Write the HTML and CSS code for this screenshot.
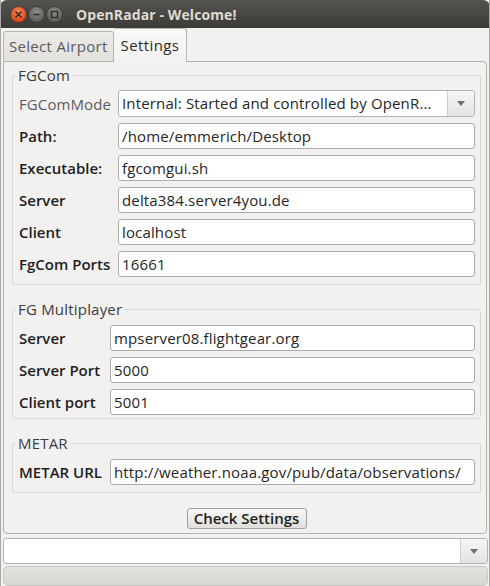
FILE: index.html
```html
<!DOCTYPE html>
<html lang="en">
<head>
    <meta charset="UTF-8">
    <title>OpenRadar - Welcome!</title>
    <link rel="stylesheet" href="styles.css">
</head>
<body>
    <div class="window">
        <div class="titlebar">
            <div class="win-buttons">
                <svg class="wbtn" width="17" height="17" viewBox="0 0 17 17">
                    <defs>
                        <radialGradient id="gClose" cx="50%" cy="35%" r="60%">
                            <stop offset="0" stop-color="#f7875a"/>
                            <stop offset="1" stop-color="#d9471a"/>
                        </radialGradient>
                    </defs>
                    <circle cx="8.5" cy="8.5" r="8" fill="url(#gClose)" stroke="#3a2a22" stroke-width="0.6"/>
                    <path d="M6 6 L11 11 M11 6 L6 11" stroke="#3c2a20" stroke-width="1.6" stroke-linecap="round"/>
                </svg>
                <svg class="wbtn" width="17" height="17" viewBox="0 0 17 17">
                    <defs>
                        <radialGradient id="gGrey" cx="50%" cy="35%" r="60%">
                            <stop offset="0" stop-color="#8f8e89"/>
                            <stop offset="1" stop-color="#5e5d58"/>
                        </radialGradient>
                    </defs>
                    <circle cx="8.5" cy="8.5" r="8" fill="url(#gGrey)" stroke="#2f2e2b" stroke-width="0.6"/>
                    <path d="M5.5 8.5 H11.5" stroke="#2e2d2a" stroke-width="1.6"/>
                </svg>
                <svg class="wbtn" width="17" height="17" viewBox="0 0 17 17">
                    <circle cx="8.5" cy="8.5" r="8" fill="url(#gGrey)" stroke="#2f2e2b" stroke-width="0.6"/>
                    <rect x="5.5" y="5.5" width="6" height="6" fill="none" stroke="#2e2d2a" stroke-width="1.4"/>
                </svg>
            </div>
            <div class="title">OpenRadar - Welcome!</div>
        </div>

        <div class="tabs">
            <div class="tab">Select Airport</div>
            <div class="tab active">Settings</div>
        </div>

        <div class="pane">
            <fieldset class="group">
                <legend>FGCom</legend>
                <div class="form first">
                    <label class="disabled">FGComMode</label>
                    <div class="combo">
                        <span class="combo-value">Internal: Started and controlled by OpenR...</span>
                        <span class="combo-arrow"></span>
                    </div>
                    <label>Path:</label>
                    <div class="field">/home/emmerich/Desktop</div>
                    <label>Executable:</label>
                    <div class="field">fgcomgui.sh</div>
                    <label>Server</label>
                    <div class="field">delta384.server4you.de</div>
                    <label>Client</label>
                    <div class="field">localhost</div>
                    <label>FgCom Ports</label>
                    <div class="field">16661</div>
                </div>
            </fieldset>

            <fieldset class="group tight">
                <legend>FG Multiplayer</legend>
                <div class="form">
                    <label>Server</label>
                    <div class="field">mpserver08.flightgear.org</div>
                    <label>Server Port</label>
                    <div class="field">5000</div>
                    <label>Client port</label>
                    <div class="field">5001</div>
                </div>
            </fieldset>

            <fieldset class="group">
                <legend>METAR</legend>
                <div class="form">
                    <label>METAR URL</label>
                    <div class="field">http://weather.noaa.gov/pub/data/observations/</div>
                </div>
            </fieldset>

            <div class="actions">
                <button class="btn">Check Settings</button>
            </div>
        </div>

        <div class="combo bottom-combo">
            <span class="combo-value"></span>
            <span class="combo-arrow"></span>
        </div>
        <div class="statusbar"></div>
    </div>
</body>
</html>
```

FILE: styles.css
```css
body {
    margin: 0;
    background: #f2f1f0;
    font-family: 'Open Sans', 'DejaVu Sans', sans-serif;
    font-size: 15px;
    color: #2b2b2b;
}

.window {
    width: 490px;
    height: 586px;
    box-sizing: border-box;
    border-left: 1px solid #a9a7a3;
    border-right: 1px solid #a9a7a3;
    background: #f2f1f0;
    overflow: hidden;
}

/* title bar */
.titlebar {
    height: 28px;
    display: flex;
    align-items: center;
    padding-left: 10px;
    margin: 0 -1px;
    background: linear-gradient(#55534e, #3c3b37);
    border-radius: 7px 7px 0 0;
}

.win-buttons {
    display: flex;
    gap: 1px;
}

.wbtn {
    display: block;
}

.title {
    margin-left: 13px;
    color: #dfdbd2;
    font-weight: 700;
    font-size: 14px;
    letter-spacing: 0.1px;
}

/* tabs */
.tabs {
    height: 33px;
    display: flex;
    align-items: flex-end;
    padding-left: 2px;
    position: relative;
    z-index: 1;
}

.tab {
    height: 30px;
    box-sizing: border-box;
    padding: 4px 5px 0 5px;
    border: 1px solid #b9b7b3;
    border-bottom: none;
    border-radius: 3px 3px 0 0;
    background: linear-gradient(#eceae7, #e3e1de);
    color: #5a5a5a;
    letter-spacing: 0.3px;
}

.tab.active {
    height: 34px;
    margin-bottom: -1px;
    padding: 6px 7px 0 7px;
    background: linear-gradient(#f9f9f8, #f2f1f0);
    color: #2b2b2b;
    border-left: none;
    letter-spacing: 0.4px;
}

/* tab content */
.pane {
    margin: 0 2px;
    height: 473px;
    box-sizing: border-box;
    border: 1px solid #b4b2ae;
    border-radius: 0 4px 4px 4px;
    padding: 4px 5px 3px 8px;
}

.group {
    margin: 0 0 15px 0;
    padding: 0 5px 7px 6px;
    border: 1px solid #d9d7d3;
    border-radius: 3px;
}

.group.tight {
    padding-bottom: 3px;
}

.group legend {
    padding: 0 2px;
    margin-left: -3px;
    line-height: 18px;
    color: #3c3c3c;
    letter-spacing: 0.2px;
}

.form {
    display: grid;
    grid-template-columns: 84px 1fr;
    column-gap: 7px;
    row-gap: 6px;
    align-items: center;
    padding-top: 7px;
}

.form.first {
    grid-template-columns: 92px 1fr;
    padding-top: 6px;
}

.form label {
    font-weight: 600;
    color: #1e1e1e;
    white-space: nowrap;
}

.form label.disabled {
    font-weight: 400;
    color: #5c5c5c;
    letter-spacing: 0.1px;
}

.field {
    height: 26px;
    box-sizing: border-box;
    padding: 0 3px;
    line-height: 24px;
    background: #fff;
    border: 1px solid #ababab;
    border-radius: 3px;
    white-space: nowrap;
    overflow: hidden;
    color: #262626;
    letter-spacing: 0.15px;
}

.combo {
    height: 27px;
    box-sizing: border-box;
    display: flex;
    border: 1px solid #b2b2b2;
    border-radius: 3px;
    background: #fff;
    overflow: hidden;
}

.combo-value {
    flex: 1;
    padding: 0 3px;
    line-height: 25px;
    white-space: nowrap;
    overflow: hidden;
    color: #262626;
    letter-spacing: 0.15px;
}

.combo-arrow {
    width: 26px;
    border-left: 1px solid #cfcfcf;
    background: linear-gradient(#f6f6f5, #e4e3e1);
    display: flex;
    align-items: center;
    justify-content: center;
}

.combo-arrow::after {
    content: "";
    border-left: 4px solid transparent;
    border-right: 4px solid transparent;
    border-top: 5px solid #707070;
}

.actions {
    display: flex;
    justify-content: center;
    margin-top: 1px;
}

.btn {
    width: 120px;
    height: 21px;
    padding: 0;
    font-family: inherit;
    font-size: 15px;
    font-weight: 600;
    line-height: 19px;
    color: #1e1e1e;
    border: 1px solid #a1a09d;
    border-radius: 3px;
    background: linear-gradient(#f8f8f7, #e0dfdc);
}

.bottom-combo {
    margin: 4px 1px 0 2px;
    height: 26px;
}

.statusbar {
    margin: 2px 1px 0 2px;
    height: 18px;
    border: 1px solid #c9c7c3;
    border-radius: 5px;
    background: linear-gradient(#e3e1de, #d9d7d4);
}
```
